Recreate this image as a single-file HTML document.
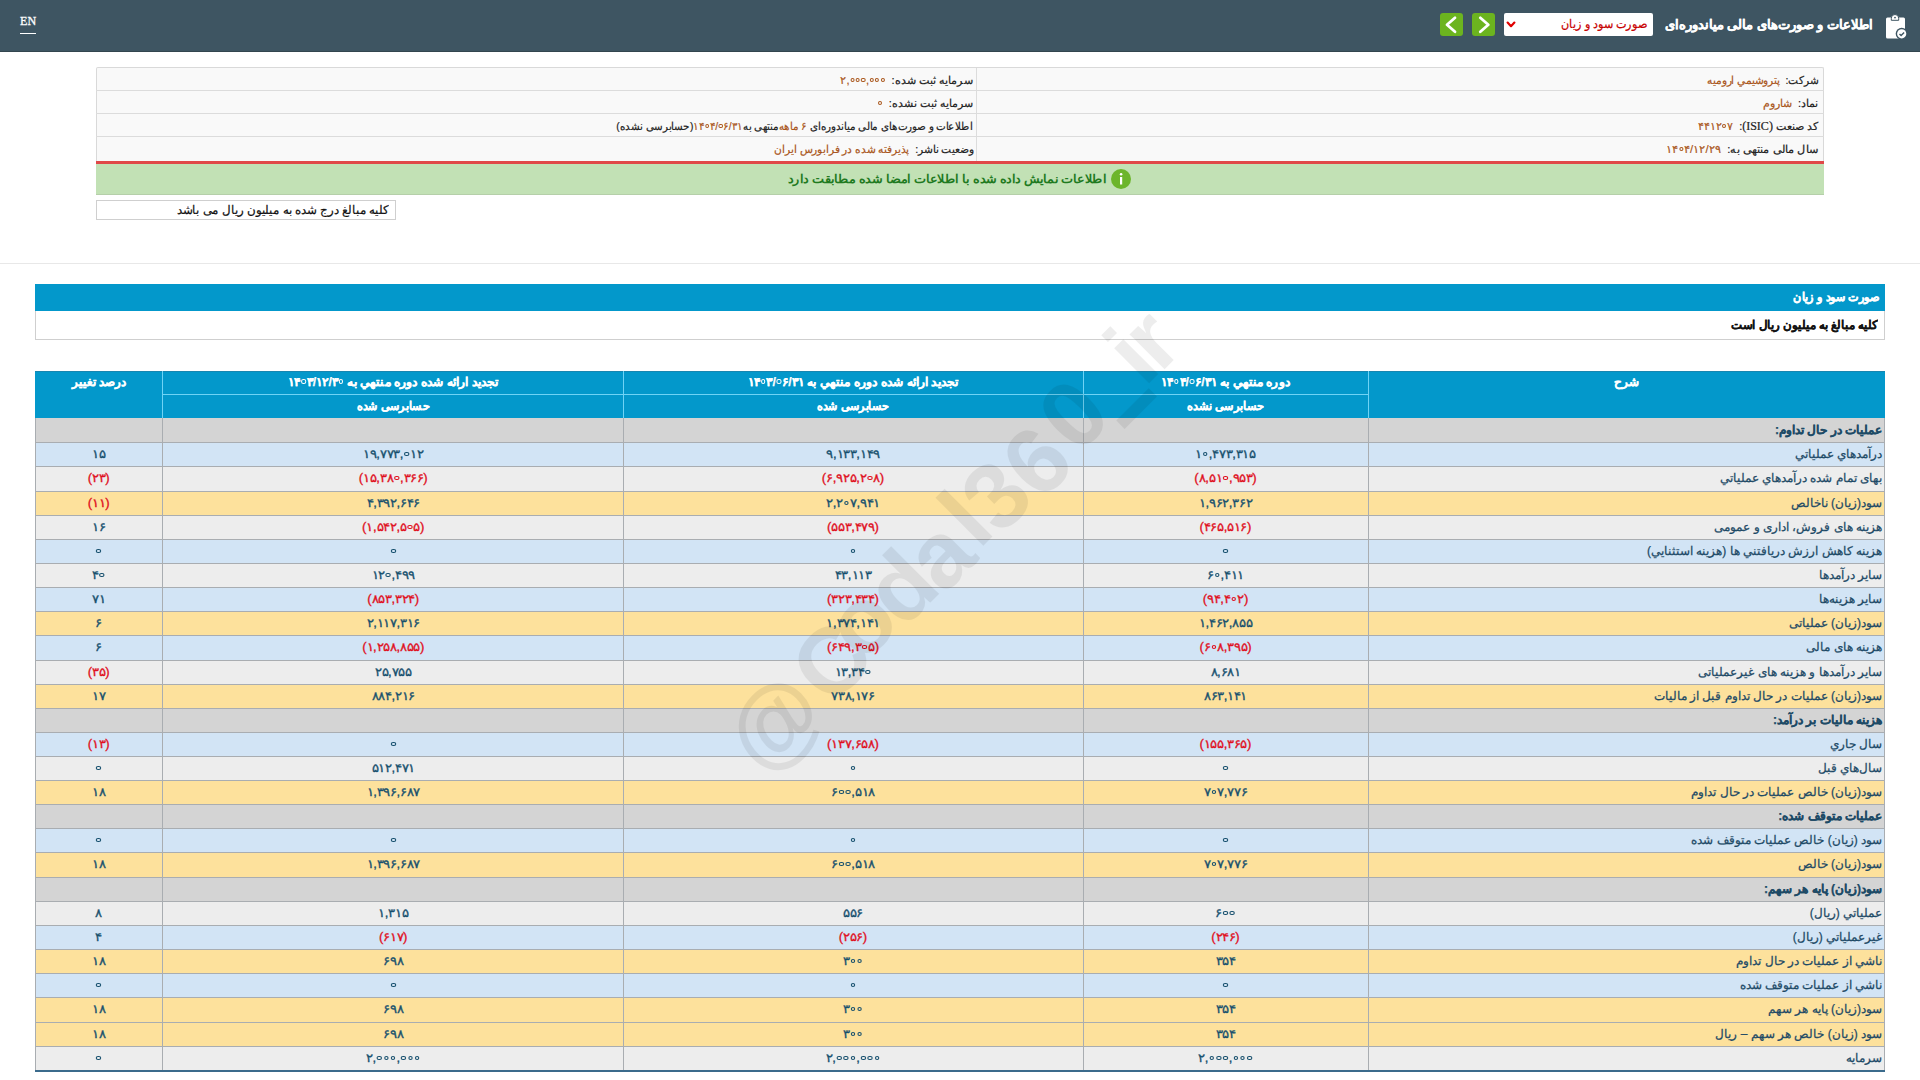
<!DOCTYPE html>
<html lang="fa">
<head>
<meta charset="utf-8">
<title>صورت سود و زیان</title>
<style>
*{box-sizing:border-box;margin:0;padding:0}
html,body{width:1920px;height:1080px;overflow:hidden;background:#fff}
body{position:relative;font-family:"Liberation Sans",sans-serif;color:#222}
div{position:absolute}
.hdr{left:0;top:0;width:1920px;height:52px;background:#3e5562;border-bottom:1px solid #33454f}
.en{-webkit-text-stroke:0.3px currentColor;left:20px;top:13px;transform:scaleX(0.93);transform-origin:left center;font-family:"Liberation Serif",serif;font-size:13px;color:#fff;line-height:16px}
.enu{left:20px;top:33px;width:16px;height:1px;background:#fff}
.ttl{-webkit-text-stroke:0.3px currentColor;right:47px;top:14px;height:22px;line-height:22px;color:#fff;font-weight:bold;font-size:13px;direction:rtl;white-space:nowrap}
.sel{left:1504px;top:13px;width:149px;height:23px;background:#fff;border-radius:2px}
.selt{-webkit-text-stroke:0.2px currentColor;right:6px;top:0;height:23px;line-height:23px;color:#c80000;font-size:12px;transform:scaleX(0.935);transform-origin:right center;direction:rtl;white-space:nowrap}
.gbtn{top:13px;width:23px;height:23px;background:#6cb41f;border-radius:3px}
.info{left:96px;top:67px;width:1728px;height:94px;background:#f9f9f9;border:1px solid #d9d9d9;border-bottom:none;border-radius:2px 2px 0 0}
.irl{left:96px;width:1728px;height:1px;background:#dcdcdc}
.ivl{left:976px;top:68px;width:1px;height:93px;background:#dcdcdc}
.itx{-webkit-text-stroke:0.2px currentColor;transform-origin:right center;height:23px;line-height:23px;font-size:11px;direction:rtl;white-space:nowrap;color:#222}
.iv{color:#a9561b}
.ser{font-family:"Liberation Serif",serif;font-size:12px}
.red{left:96px;top:160.5px;width:1728px;height:3px;background:#e04848}
.grn{left:96px;top:163.5px;width:1728px;height:31px;background:#c2e1b5;border-bottom:1px solid #b5cfa9}
.gtx{right:814px;top:167px;height:24px;line-height:24px;color:#1f7a1f;font-weight:bold;font-size:12px;direction:rtl;white-space:nowrap;transform:scaleX(1.063);transform-origin:right center}
.gic{left:1111px;top:169px;width:20px;height:20px;border-radius:50%;background:#6cb52b}
.note{left:96px;top:200px;width:300px;height:20px;border:1px solid #cfcfcf;background:#fff}
.notet{-webkit-text-stroke:0.2px currentColor;transform:scaleX(0.988);transform-origin:right center;right:6px;top:0;height:18px;line-height:18px;font-size:12px;direction:rtl;white-space:nowrap;color:#111}
.sep{left:0;top:263px;width:1920px;height:1px;background:#e8e8e8}
.tbar{left:35px;top:284px;width:1850px;height:27px;background:#0398cb}
.tbart{-webkit-text-stroke:0.3px currentColor;right:6px;top:0;height:27px;line-height:27px;color:#fff;font-weight:bold;font-size:12px;direction:rtl;white-space:nowrap;transform:scaleX(0.931);transform-origin:right center}
.sub{left:35px;top:311px;width:1850px;height:29px;background:#fff;border:1px solid #cfcfcf;border-top:none}
.subt{-webkit-text-stroke:0.2px currentColor;right:6px;top:0;height:28px;line-height:28px;color:#111;font-weight:bold;font-size:12px;transform:scaleX(0.981);transform-origin:right center;direction:rtl;white-space:nowrap}
.th{background:#0398cb;border-top:1px solid #1786b0}
.htx{-webkit-text-stroke:0.25px currentColor;color:#fff;font-weight:bold;font-size:12px;text-align:center;direction:rtl;white-space:nowrap}
.hl{background:#6fd3f5}
.row{left:35px;width:1850px}
.dsc{right:38px;color:#1d4a66;font-size:12px;-webkit-text-stroke:0.25px currentColor;direction:rtl;white-space:nowrap;text-align:right}
.sec{font-weight:bold}
.num{color:#17506e;font-weight:normal;-webkit-text-stroke:0.3px currentColor;font-size:12px;transform:scaleX(1.097);text-align:center;direction:ltr;white-space:nowrap}
.neg{color:#e0101e}
.rl{left:35px;width:1850px;height:1px;background:#a9adb1}
.vl{width:1px;background:#a9adb1}
.bot{left:35px;width:1850px;height:2px;background:#3b6b8c}
.z{display:inline-block;width:4.6px;height:4.4px;border:1.5px solid currentColor;border-radius:50%;margin:0 0.8px;vertical-align:2px}
.itx .z{width:4.2px;height:4px;border-width:1.2px;vertical-align:2px;margin:0 0.6px}
.htx .z{width:4.4px;height:4.2px;border-width:1.4px}
.wm{left:0;top:0;width:1920px;height:1080px;pointer-events:none}
</style>
</head>
<body>
<div class="hdr"></div>
<div class="en">EN</div>
<div class="enu"></div>
<svg style="position:absolute;left:1880px;top:12px" width="30" height="30" viewBox="0 0 30 30">
  <rect x="6" y="5.5" width="19" height="21" rx="1.5" fill="#fff"/>
  <path d="M11.3 8.3 V6.2 a3.7 3.7 0 0 1 7.4 0 V8.3 Z" fill="#fff" stroke="#3e5562" stroke-width="1"/><circle cx="15" cy="5.6" r="0.9" fill="#3e5562"/>
  <circle cx="21.7" cy="21.8" r="6" fill="#3e5562"/>
  <circle cx="21.7" cy="21.8" r="4.6" fill="#fff"/>
  <path d="M19.5 22 l1.6 1.5 l3 -3" fill="none" stroke="#3e5562" stroke-width="1.4"/>
</svg>
<div class="ttl">اطلاعات و صورت‌های مالی میاندوره‌ای</div>
<div class="sel"><div class="selt">صورت سود و زیان</div>
<svg style="position:absolute;left:1px;top:7px" width="12" height="9" viewBox="0 0 12 9"><path d="M2.6 2.6 L6 6.2 L9.4 2.6" fill="none" stroke="#e00000" stroke-width="2.2" stroke-linecap="round" stroke-linejoin="round"/></svg>
</div>
<div class="gbtn" style="left:1440px"><svg width="23" height="23" viewBox="0 0 23 23"><path d="M15 4.8 L7 11.8 L15 18.8" fill="none" stroke="#fff" stroke-width="2.8" stroke-linecap="round" stroke-linejoin="round"/></svg></div>
<div class="gbtn" style="left:1472px"><svg width="23" height="23" viewBox="0 0 23 23"><path d="M8.3 4.8 L16.3 11.8 L8.3 18.8" fill="none" stroke="#fff" stroke-width="2.8" stroke-linecap="round" stroke-linejoin="round"/></svg></div>

<div class="info"></div>
<div class="irl" style="top:90px"></div>
<div class="irl" style="top:113px"></div>
<div class="irl" style="top:136px"></div>
<div class="ivl"></div>
<div class="itx" style="right:102px;top:69px;transform:scaleX(0.963)">شرکت:&nbsp; <span class="iv">پتروشیمي ارومیه</span></div>
<div class="itx" style="right:102px;top:92px">نماد:&nbsp; <span class="iv">شاروم</span></div>
<div class="itx" style="right:102px;top:115px">کد صنعت <span class="ser">(ISIC)</span>:&nbsp; <bdi dir="ltr" class="iv">۴۴۱۲<span class="z"></span>۷</bdi></div>
<div class="itx" style="right:102px;top:138px;transform:scaleX(1.027)">سال مالی منتهی به:&nbsp; <bdi dir="ltr" class="iv">۱۴<span class="z"></span>۴/۱۲/۲۹</bdi></div>
<div class="itx" style="right:947px;top:69px;transform:scaleX(1.012)">سرمایه ثبت شده:&nbsp; <bdi dir="ltr" class="iv">۲,<span class="z"></span><span class="z"></span><span class="z"></span>,<span class="z"></span><span class="z"></span><span class="z"></span></bdi></div>
<div class="itx" style="right:947px;top:92px">سرمایه ثبت نشده:&nbsp; <bdi dir="ltr" class="iv"><span class="z"></span></bdi></div>
<div class="itx" style="right:947px;top:115px;transform:scaleX(0.936)">اطلاعات و صورت‌های مالی میاندوره‌ای <span class="iv">۶ ماهه</span>&zwnj;منتهی به<bdi dir="ltr" class="iv">۱۴<span class="z"></span>۴/<span class="z"></span>۶/۳۱</bdi>(حسابرسی نشده)</div>
<div class="itx" style="right:947px;top:138px;transform:scaleX(0.969)">وضعیت ناشر:&nbsp; <span class="iv">پذیرفته شده در فرابورس ایران</span></div>
<div class="red"></div>
<div class="grn"></div>
<div class="gic"><svg width="20" height="20" viewBox="0 0 20 20"><rect x="9" y="8" width="2.2" height="7.5" fill="#fff"/><circle cx="10.1" cy="5.3" r="1.3" fill="#fff"/></svg></div>
<div class="gtx">اطلاعات نمایش داده شده با اطلاعات امضا شده مطابقت دارد</div>

<div class="note"><div class="notet">کلیه مبالغ درج شده به میلیون ریال می باشد</div></div>
<div class="sep"></div>

<div class="tbar"><div class="tbart">صورت سود و زیان</div></div>
<div class="sub"><div class="subt">کلیه مبالغ به میلیون ریال است</div></div>

<div class="tbl" style="left:0;top:0;width:1920px;height:1080px">
<div class="th" style="top:370.5px;height:47.5px;left:35px;width:1850px"></div>
<div class="htx" style="left:1368px;width:517px;top:369.5px;height:24.0px;line-height:24.0px;transform:scaleX(1.0)">شرح</div>
<div class="htx" style="left:1083px;width:285px;top:369.5px;height:24.0px;line-height:24.0px;transform:scaleX(1.014)">دوره منتهي به <bdi dir="ltr">۱۴<span class="z"></span>۴/<span class="z"></span>۶/۳۱</bdi></div>
<div class="htx" style="left:1083px;width:285px;top:394.5px;height:23.5px;line-height:23.5px;transform:scaleX(0.94)">حسابرسی نشده</div>
<div class="htx" style="left:623px;width:460px;top:369.5px;height:24.0px;line-height:24.0px;transform:scaleX(1.021)">تجدید ارائه شده دوره منتهي به <bdi dir="ltr">۱۴<span class="z"></span>۳/<span class="z"></span>۶/۳۱</bdi></div>
<div class="htx" style="left:623px;width:460px;top:394.5px;height:23.5px;line-height:23.5px;transform:scaleX(0.93)">حسابرسی شده</div>
<div class="htx" style="left:162.5px;width:460.5px;top:369.5px;height:24.0px;line-height:24.0px;transform:scaleX(1.021)">تجدید ارائه شده دوره منتهي به <bdi dir="ltr">۱۴<span class="z"></span>۳/۱۲/۳<span class="z"></span></bdi></div>
<div class="htx" style="left:162.5px;width:460.5px;top:394.5px;height:23.5px;line-height:23.5px;transform:scaleX(0.93)">حسابرسی شده</div>
<div class="htx" style="left:35px;width:127.5px;top:369.5px;height:24.0px;line-height:24.0px;transform:scaleX(0.984)">درصد تغییر</div>
<div class="hl" style="left:163px;width:1205px;top:394px;height:1px"></div>
<div class="hl" style="left:162px;width:1px;top:371px;height:47px"></div>
<div class="hl" style="left:623px;width:1px;top:371px;height:47px"></div>
<div class="hl" style="left:1083px;width:1px;top:371px;height:47px"></div>
<div class="hl" style="left:1368px;width:1px;top:371px;height:47px"></div>
<div class="row" style="top:418.00px;height:24.00px;background:#d4d4d4"></div>
<div class="dsc sec" style="top:418.00px;height:24.00px;line-height:24.00px">عملیات در حال تداوم:</div>
<div class="row" style="top:442.00px;height:24.00px;background:#d2e4f5"></div>
<div class="dsc" style="top:442.00px;height:24.00px;line-height:24.00px">درآمدهاي عملياتي</div>
<div class="num" style="left:1083px;width:285px;top:442.00px;height:24.00px;line-height:24.00px">۱<span class="z"></span>,۴۷۳,۳۱۵</div>
<div class="num" style="left:623px;width:460px;top:442.00px;height:24.00px;line-height:24.00px">۹,۱۳۳,۱۴۹</div>
<div class="num" style="left:162.5px;width:460.5px;top:442.00px;height:24.00px;line-height:24.00px">۱۹,۷۷۳,<span class="z"></span>۱۲</div>
<div class="num" style="left:35px;width:127.5px;top:442.00px;height:24.00px;line-height:24.00px">۱۵</div>
<div class="row" style="top:466.00px;height:25.00px;background:#ededed"></div>
<div class="dsc" style="top:466.00px;height:25.00px;line-height:25.00px">بهای تمام شده درآمدهاي عملياتي</div>
<div class="num neg" style="left:1083px;width:285px;top:466.00px;height:25.00px;line-height:25.00px">(۸,۵۱<span class="z"></span>,۹۵۳)</div>
<div class="num neg" style="left:623px;width:460px;top:466.00px;height:25.00px;line-height:25.00px">(۶,۹۲۵,۲<span class="z"></span>۸)</div>
<div class="num neg" style="left:162.5px;width:460.5px;top:466.00px;height:25.00px;line-height:25.00px">(۱۵,۳۸<span class="z"></span>,۳۶۶)</div>
<div class="num neg" style="left:35px;width:127.5px;top:466.00px;height:25.00px;line-height:25.00px">(۲۳)</div>
<div class="row" style="top:491.00px;height:24.00px;background:#fde19c"></div>
<div class="dsc" style="top:491.00px;height:24.00px;line-height:24.00px">سود(زیان) ناخالص</div>
<div class="num" style="left:1083px;width:285px;top:491.00px;height:24.00px;line-height:24.00px">۱,۹۶۲,۳۶۲</div>
<div class="num" style="left:623px;width:460px;top:491.00px;height:24.00px;line-height:24.00px">۲,۲<span class="z"></span>۷,۹۴۱</div>
<div class="num" style="left:162.5px;width:460.5px;top:491.00px;height:24.00px;line-height:24.00px">۴,۳۹۲,۶۴۶</div>
<div class="num neg" style="left:35px;width:127.5px;top:491.00px;height:24.00px;line-height:24.00px">(۱۱)</div>
<div class="row" style="top:515.00px;height:24.00px;background:#ededed"></div>
<div class="dsc" style="top:515.00px;height:24.00px;line-height:24.00px">هزینه های فروش، اداری و عمومی</div>
<div class="num neg" style="left:1083px;width:285px;top:515.00px;height:24.00px;line-height:24.00px">(۴۶۵,۵۱۶)</div>
<div class="num neg" style="left:623px;width:460px;top:515.00px;height:24.00px;line-height:24.00px">(۵۵۳,۴۷۹)</div>
<div class="num neg" style="left:162.5px;width:460.5px;top:515.00px;height:24.00px;line-height:24.00px">(۱,۵۴۲,۵<span class="z"></span>۵)</div>
<div class="num" style="left:35px;width:127.5px;top:515.00px;height:24.00px;line-height:24.00px">۱۶</div>
<div class="row" style="top:539.00px;height:24.00px;background:#d2e4f5"></div>
<div class="dsc" style="top:539.00px;height:24.00px;line-height:24.00px">هزینه کاهش ارزش دریافتني ها (هزینه استثنایي)</div>
<div class="num" style="left:1083px;width:285px;top:539.00px;height:24.00px;line-height:24.00px"><span class="z"></span></div>
<div class="num" style="left:623px;width:460px;top:539.00px;height:24.00px;line-height:24.00px"><span class="z"></span></div>
<div class="num" style="left:162.5px;width:460.5px;top:539.00px;height:24.00px;line-height:24.00px"><span class="z"></span></div>
<div class="num" style="left:35px;width:127.5px;top:539.00px;height:24.00px;line-height:24.00px"><span class="z"></span></div>
<div class="row" style="top:563.00px;height:24.00px;background:#ededed"></div>
<div class="dsc" style="top:563.00px;height:24.00px;line-height:24.00px">سایر درآمدها</div>
<div class="num" style="left:1083px;width:285px;top:563.00px;height:24.00px;line-height:24.00px">۶<span class="z"></span>,۴۱۱</div>
<div class="num" style="left:623px;width:460px;top:563.00px;height:24.00px;line-height:24.00px">۴۳,۱۱۳</div>
<div class="num" style="left:162.5px;width:460.5px;top:563.00px;height:24.00px;line-height:24.00px">۱۲<span class="z"></span>,۴۹۹</div>
<div class="num" style="left:35px;width:127.5px;top:563.00px;height:24.00px;line-height:24.00px">۴<span class="z"></span></div>
<div class="row" style="top:587.00px;height:24.00px;background:#d2e4f5"></div>
<div class="dsc" style="top:587.00px;height:24.00px;line-height:24.00px">سایر هزینه‌ها</div>
<div class="num neg" style="left:1083px;width:285px;top:587.00px;height:24.00px;line-height:24.00px">(۹۴,۴<span class="z"></span>۲)</div>
<div class="num neg" style="left:623px;width:460px;top:587.00px;height:24.00px;line-height:24.00px">(۳۲۳,۴۳۴)</div>
<div class="num neg" style="left:162.5px;width:460.5px;top:587.00px;height:24.00px;line-height:24.00px">(۸۵۳,۳۲۴)</div>
<div class="num" style="left:35px;width:127.5px;top:587.00px;height:24.00px;line-height:24.00px">۷۱</div>
<div class="row" style="top:611.00px;height:24.00px;background:#fde19c"></div>
<div class="dsc" style="top:611.00px;height:24.00px;line-height:24.00px">سود(زیان) عملیاتی</div>
<div class="num" style="left:1083px;width:285px;top:611.00px;height:24.00px;line-height:24.00px">۱,۴۶۲,۸۵۵</div>
<div class="num" style="left:623px;width:460px;top:611.00px;height:24.00px;line-height:24.00px">۱,۳۷۴,۱۴۱</div>
<div class="num" style="left:162.5px;width:460.5px;top:611.00px;height:24.00px;line-height:24.00px">۲,۱۱۷,۳۱۶</div>
<div class="num" style="left:35px;width:127.5px;top:611.00px;height:24.00px;line-height:24.00px">۶</div>
<div class="row" style="top:635.00px;height:25.00px;background:#d2e4f5"></div>
<div class="dsc" style="top:635.00px;height:25.00px;line-height:25.00px">هزینه های مالی</div>
<div class="num neg" style="left:1083px;width:285px;top:635.00px;height:25.00px;line-height:25.00px">(۶<span class="z"></span>۸,۳۹۵)</div>
<div class="num neg" style="left:623px;width:460px;top:635.00px;height:25.00px;line-height:25.00px">(۶۴۹,۳<span class="z"></span>۵)</div>
<div class="num neg" style="left:162.5px;width:460.5px;top:635.00px;height:25.00px;line-height:25.00px">(۱,۲۵۸,۸۵۵)</div>
<div class="num" style="left:35px;width:127.5px;top:635.00px;height:25.00px;line-height:25.00px">۶</div>
<div class="row" style="top:660.00px;height:24.00px;background:#ededed"></div>
<div class="dsc" style="top:660.00px;height:24.00px;line-height:24.00px">سایر درآمدها و هزینه های غیرعملیاتی</div>
<div class="num" style="left:1083px;width:285px;top:660.00px;height:24.00px;line-height:24.00px">۸,۶۸۱</div>
<div class="num" style="left:623px;width:460px;top:660.00px;height:24.00px;line-height:24.00px">۱۳,۳۴<span class="z"></span></div>
<div class="num" style="left:162.5px;width:460.5px;top:660.00px;height:24.00px;line-height:24.00px">۲۵,۷۵۵</div>
<div class="num neg" style="left:35px;width:127.5px;top:660.00px;height:24.00px;line-height:24.00px">(۳۵)</div>
<div class="row" style="top:684.00px;height:24.00px;background:#fde19c"></div>
<div class="dsc" style="top:684.00px;height:24.00px;line-height:24.00px">سود(زیان) عملیات در حال تداوم قبل از مالیات</div>
<div class="num" style="left:1083px;width:285px;top:684.00px;height:24.00px;line-height:24.00px">۸۶۳,۱۴۱</div>
<div class="num" style="left:623px;width:460px;top:684.00px;height:24.00px;line-height:24.00px">۷۳۸,۱۷۶</div>
<div class="num" style="left:162.5px;width:460.5px;top:684.00px;height:24.00px;line-height:24.00px">۸۸۴,۲۱۶</div>
<div class="num" style="left:35px;width:127.5px;top:684.00px;height:24.00px;line-height:24.00px">۱۷</div>
<div class="row" style="top:708.00px;height:24.00px;background:#d4d4d4"></div>
<div class="dsc sec" style="top:708.00px;height:24.00px;line-height:24.00px">هزینه مالیات بر درآمد:</div>
<div class="row" style="top:732.00px;height:24.00px;background:#d2e4f5"></div>
<div class="dsc" style="top:732.00px;height:24.00px;line-height:24.00px">سال جاري</div>
<div class="num neg" style="left:1083px;width:285px;top:732.00px;height:24.00px;line-height:24.00px">(۱۵۵,۳۶۵)</div>
<div class="num neg" style="left:623px;width:460px;top:732.00px;height:24.00px;line-height:24.00px">(۱۳۷,۶۵۸)</div>
<div class="num" style="left:162.5px;width:460.5px;top:732.00px;height:24.00px;line-height:24.00px"><span class="z"></span></div>
<div class="num neg" style="left:35px;width:127.5px;top:732.00px;height:24.00px;line-height:24.00px">(۱۳)</div>
<div class="row" style="top:756.00px;height:24.00px;background:#ededed"></div>
<div class="dsc" style="top:756.00px;height:24.00px;line-height:24.00px">سال‌هاي قبل</div>
<div class="num" style="left:1083px;width:285px;top:756.00px;height:24.00px;line-height:24.00px"><span class="z"></span></div>
<div class="num" style="left:623px;width:460px;top:756.00px;height:24.00px;line-height:24.00px"><span class="z"></span></div>
<div class="num" style="left:162.5px;width:460.5px;top:756.00px;height:24.00px;line-height:24.00px">۵۱۲,۴۷۱</div>
<div class="num" style="left:35px;width:127.5px;top:756.00px;height:24.00px;line-height:24.00px"><span class="z"></span></div>
<div class="row" style="top:780.00px;height:24.00px;background:#fde19c"></div>
<div class="dsc" style="top:780.00px;height:24.00px;line-height:24.00px">سود(زیان) خالص عملیات در حال تداوم</div>
<div class="num" style="left:1083px;width:285px;top:780.00px;height:24.00px;line-height:24.00px">۷<span class="z"></span>۷,۷۷۶</div>
<div class="num" style="left:623px;width:460px;top:780.00px;height:24.00px;line-height:24.00px">۶<span class="z"></span><span class="z"></span>,۵۱۸</div>
<div class="num" style="left:162.5px;width:460.5px;top:780.00px;height:24.00px;line-height:24.00px">۱,۳۹۶,۶۸۷</div>
<div class="num" style="left:35px;width:127.5px;top:780.00px;height:24.00px;line-height:24.00px">۱۸</div>
<div class="row" style="top:804.00px;height:24.00px;background:#d4d4d4"></div>
<div class="dsc sec" style="top:804.00px;height:24.00px;line-height:24.00px">عملیات متوقف شده:</div>
<div class="row" style="top:828.00px;height:24.00px;background:#d2e4f5"></div>
<div class="dsc" style="top:828.00px;height:24.00px;line-height:24.00px">سود (زیان) خالص عملیات متوقف شده</div>
<div class="num" style="left:1083px;width:285px;top:828.00px;height:24.00px;line-height:24.00px"><span class="z"></span></div>
<div class="num" style="left:623px;width:460px;top:828.00px;height:24.00px;line-height:24.00px"><span class="z"></span></div>
<div class="num" style="left:162.5px;width:460.5px;top:828.00px;height:24.00px;line-height:24.00px"><span class="z"></span></div>
<div class="num" style="left:35px;width:127.5px;top:828.00px;height:24.00px;line-height:24.00px"><span class="z"></span></div>
<div class="row" style="top:852.00px;height:25.00px;background:#fde19c"></div>
<div class="dsc" style="top:852.00px;height:25.00px;line-height:25.00px">سود(زیان) خالص</div>
<div class="num" style="left:1083px;width:285px;top:852.00px;height:25.00px;line-height:25.00px">۷<span class="z"></span>۷,۷۷۶</div>
<div class="num" style="left:623px;width:460px;top:852.00px;height:25.00px;line-height:25.00px">۶<span class="z"></span><span class="z"></span>,۵۱۸</div>
<div class="num" style="left:162.5px;width:460.5px;top:852.00px;height:25.00px;line-height:25.00px">۱,۳۹۶,۶۸۷</div>
<div class="num" style="left:35px;width:127.5px;top:852.00px;height:25.00px;line-height:25.00px">۱۸</div>
<div class="row" style="top:877.00px;height:24.00px;background:#d4d4d4"></div>
<div class="dsc sec" style="top:877.00px;height:24.00px;line-height:24.00px">سود(زیان) پایه هر سهم:</div>
<div class="row" style="top:901.00px;height:24.00px;background:#ededed"></div>
<div class="dsc" style="top:901.00px;height:24.00px;line-height:24.00px">عملیاتي (ریال)</div>
<div class="num" style="left:1083px;width:285px;top:901.00px;height:24.00px;line-height:24.00px">۶<span class="z"></span><span class="z"></span></div>
<div class="num" style="left:623px;width:460px;top:901.00px;height:24.00px;line-height:24.00px">۵۵۶</div>
<div class="num" style="left:162.5px;width:460.5px;top:901.00px;height:24.00px;line-height:24.00px">۱,۳۱۵</div>
<div class="num" style="left:35px;width:127.5px;top:901.00px;height:24.00px;line-height:24.00px">۸</div>
<div class="row" style="top:925.00px;height:24.00px;background:#d2e4f5"></div>
<div class="dsc" style="top:925.00px;height:24.00px;line-height:24.00px">غیرعملیاتي (ریال)</div>
<div class="num neg" style="left:1083px;width:285px;top:925.00px;height:24.00px;line-height:24.00px">(۲۴۶)</div>
<div class="num neg" style="left:623px;width:460px;top:925.00px;height:24.00px;line-height:24.00px">(۲۵۶)</div>
<div class="num neg" style="left:162.5px;width:460.5px;top:925.00px;height:24.00px;line-height:24.00px">(۶۱۷)</div>
<div class="num" style="left:35px;width:127.5px;top:925.00px;height:24.00px;line-height:24.00px">۴</div>
<div class="row" style="top:949.00px;height:24.00px;background:#fde19c"></div>
<div class="dsc" style="top:949.00px;height:24.00px;line-height:24.00px">ناشي از عملیات در حال تداوم</div>
<div class="num" style="left:1083px;width:285px;top:949.00px;height:24.00px;line-height:24.00px">۳۵۴</div>
<div class="num" style="left:623px;width:460px;top:949.00px;height:24.00px;line-height:24.00px">۳<span class="z"></span><span class="z"></span></div>
<div class="num" style="left:162.5px;width:460.5px;top:949.00px;height:24.00px;line-height:24.00px">۶۹۸</div>
<div class="num" style="left:35px;width:127.5px;top:949.00px;height:24.00px;line-height:24.00px">۱۸</div>
<div class="row" style="top:973.00px;height:24.00px;background:#d2e4f5"></div>
<div class="dsc" style="top:973.00px;height:24.00px;line-height:24.00px">ناشي از عملیات متوقف شده</div>
<div class="num" style="left:1083px;width:285px;top:973.00px;height:24.00px;line-height:24.00px"><span class="z"></span></div>
<div class="num" style="left:623px;width:460px;top:973.00px;height:24.00px;line-height:24.00px"><span class="z"></span></div>
<div class="num" style="left:162.5px;width:460.5px;top:973.00px;height:24.00px;line-height:24.00px"><span class="z"></span></div>
<div class="num" style="left:35px;width:127.5px;top:973.00px;height:24.00px;line-height:24.00px"><span class="z"></span></div>
<div class="row" style="top:997.00px;height:25.00px;background:#fde19c"></div>
<div class="dsc" style="top:997.00px;height:25.00px;line-height:25.00px">سود(زیان) پایه هر سهم</div>
<div class="num" style="left:1083px;width:285px;top:997.00px;height:25.00px;line-height:25.00px">۳۵۴</div>
<div class="num" style="left:623px;width:460px;top:997.00px;height:25.00px;line-height:25.00px">۳<span class="z"></span><span class="z"></span></div>
<div class="num" style="left:162.5px;width:460.5px;top:997.00px;height:25.00px;line-height:25.00px">۶۹۸</div>
<div class="num" style="left:35px;width:127.5px;top:997.00px;height:25.00px;line-height:25.00px">۱۸</div>
<div class="row" style="top:1022.00px;height:24.00px;background:#fde19c"></div>
<div class="dsc" style="top:1022.00px;height:24.00px;line-height:24.00px">سود (زیان) خالص هر سهم – ریال</div>
<div class="num" style="left:1083px;width:285px;top:1022.00px;height:24.00px;line-height:24.00px">۳۵۴</div>
<div class="num" style="left:623px;width:460px;top:1022.00px;height:24.00px;line-height:24.00px">۳<span class="z"></span><span class="z"></span></div>
<div class="num" style="left:162.5px;width:460.5px;top:1022.00px;height:24.00px;line-height:24.00px">۶۹۸</div>
<div class="num" style="left:35px;width:127.5px;top:1022.00px;height:24.00px;line-height:24.00px">۱۸</div>
<div class="row" style="top:1046.00px;height:24.00px;background:#ededed"></div>
<div class="dsc" style="top:1046.00px;height:24.00px;line-height:24.00px">سرمایه</div>
<div class="num" style="left:1083px;width:285px;top:1046.00px;height:24.00px;line-height:24.00px">۲,<span class="z"></span><span class="z"></span><span class="z"></span>,<span class="z"></span><span class="z"></span><span class="z"></span></div>
<div class="num" style="left:623px;width:460px;top:1046.00px;height:24.00px;line-height:24.00px">۲,<span class="z"></span><span class="z"></span><span class="z"></span>,<span class="z"></span><span class="z"></span><span class="z"></span></div>
<div class="num" style="left:162.5px;width:460.5px;top:1046.00px;height:24.00px;line-height:24.00px">۲,<span class="z"></span><span class="z"></span><span class="z"></span>,<span class="z"></span><span class="z"></span><span class="z"></span></div>
<div class="num" style="left:35px;width:127.5px;top:1046.00px;height:24.00px;line-height:24.00px"><span class="z"></span></div>
<div class="rl" style="top:442px"></div>
<div class="rl" style="top:466px"></div>
<div class="rl" style="top:491px"></div>
<div class="rl" style="top:515px"></div>
<div class="rl" style="top:539px"></div>
<div class="rl" style="top:563px"></div>
<div class="rl" style="top:587px"></div>
<div class="rl" style="top:611px"></div>
<div class="rl" style="top:635px"></div>
<div class="rl" style="top:660px"></div>
<div class="rl" style="top:684px"></div>
<div class="rl" style="top:708px"></div>
<div class="rl" style="top:732px"></div>
<div class="rl" style="top:756px"></div>
<div class="rl" style="top:780px"></div>
<div class="rl" style="top:804px"></div>
<div class="rl" style="top:828px"></div>
<div class="rl" style="top:852px"></div>
<div class="rl" style="top:877px"></div>
<div class="rl" style="top:901px"></div>
<div class="rl" style="top:925px"></div>
<div class="rl" style="top:949px"></div>
<div class="rl" style="top:973px"></div>
<div class="rl" style="top:997px"></div>
<div class="rl" style="top:1022px"></div>
<div class="rl" style="top:1046px"></div>
<div class="vl" style="left:162px;top:418px;height:652px"></div>
<div class="vl" style="left:623px;top:418px;height:652px"></div>
<div class="vl" style="left:1083px;top:418px;height:652px"></div>
<div class="vl" style="left:1368px;top:418px;height:652px"></div>
<div class="vl" style="left:35px;top:418px;height:652px"></div>
<div class="vl" style="left:1884px;top:418px;height:652px"></div>
<div class="bot" style="top:1070px"></div>
</div>

<svg class="wm" style="position:absolute;left:0;top:0" width="1920" height="1080" viewBox="0 0 1920 1080">
  <g opacity="0.065" transform="translate(757.03 778.35) rotate(-44.98) scale(0.9339)" fill="#000" font-family="Liberation Sans" font-weight="bold" font-size="100">
    <text x="6.0 108.8 166.5 223.3 279.6 340.5 367.3 423.9 487.25" y="4.6 2.2 -6 -2 2.7 -5 1.1 6 -1.9">@Codal360</text>
    <rect x="542.9" y="1" width="49" height="12.5"/>
    <text x="589.2 611.6" y="-2.5 -1.5">ir</text>
  </g>
</svg>
</body>
</html>
